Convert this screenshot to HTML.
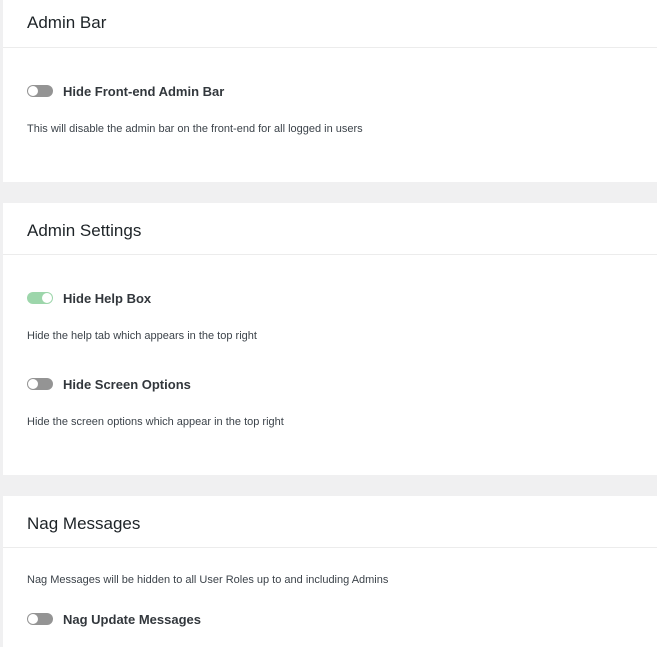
<!DOCTYPE html>
<html><head><style>
body{margin:0;width:657px;height:647px;background:#f0f0f1;font-family:"Liberation Sans",sans-serif;overflow:hidden;position:relative}
.p{position:absolute;left:3px;right:0;background:#fff}
.t{position:absolute;left:24px;font-size:17px;color:#1d2327}
.d{position:absolute;left:0;right:0;height:1px;background:#ececec}
.tg{position:absolute;left:24px;width:26px;height:12px;border-radius:6px;background:#949494}
.tg:after{content:"";position:absolute;top:1px;left:1px;width:10px;height:10px;border-radius:50%;background:#fff}
.tg.on{background:#9dd6ab}.tg.on:after{left:15px}
.l{position:absolute;left:60px;font-size:13px;font-weight:bold;color:#32373c}
.s{position:absolute;left:24px;font-size:11px;color:#3c434a}
</style></head><body>
<div class="p" style="top:0;height:182px">
<div class="t" style="top:13px">Admin Bar</div><div class="d" style="top:47px"></div>
<div class="tg" style="top:85px"></div><div class="l" style="top:84px">Hide Front-end Admin Bar</div>
<div class="s" style="top:123px">This will disable the admin bar on the front-end for all logged in users</div>
</div>
<div class="p" style="top:203px;height:272px">
<div class="t" style="top:18px">Admin Settings</div><div class="d" style="top:51px"></div>
<div class="tg on" style="top:89px"></div><div class="l" style="top:88px">Hide Help Box</div>
<div class="s" style="top:127px">Hide the help tab which appears in the top right</div>
<div class="tg" style="top:175px"></div><div class="l" style="top:174px">Hide Screen Options</div>
<div class="s" style="top:213px">Hide the screen options which appear in the top right</div>
</div>
<div class="p" style="top:496px;height:151px">
<div class="t" style="top:18px">Nag Messages</div><div class="d" style="top:51px"></div>
<div class="s" style="top:78px">Nag Messages will be hidden to all User Roles up to and including Admins</div>
<div class="tg" style="top:117px"></div><div class="l" style="top:116px">Nag Update Messages</div>
</div>
</body></html>
